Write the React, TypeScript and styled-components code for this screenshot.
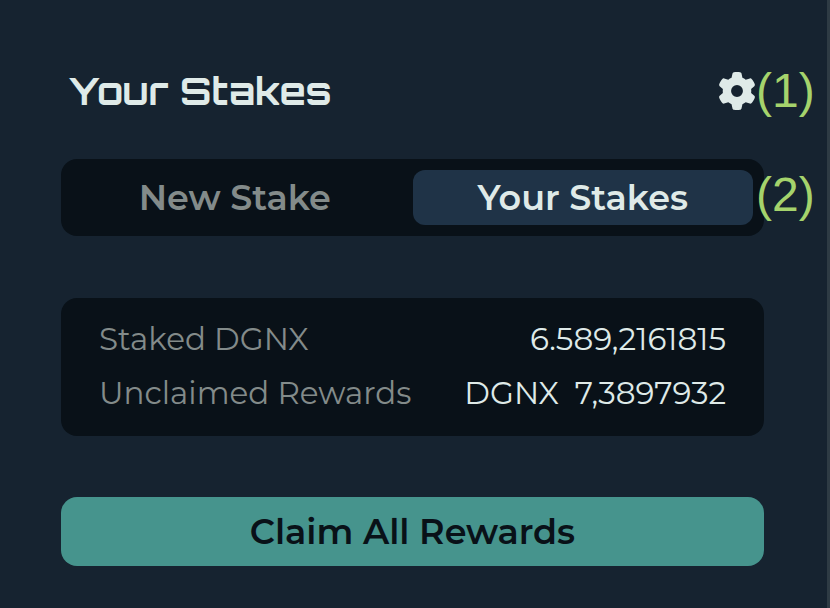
import React, { useState } from "react";
import styled, { createGlobalStyle } from "styled-components";
import { FaGear } from "react-icons/fa6";

const Global = createGlobalStyle`
  * { box-sizing: border-box; }
  body { margin: 0; background: #162330; }
  button { font: inherit; border: 0; padding: 0; cursor: pointer; }
`;

const Page = styled.main`
  min-height: 100vh;
  padding: 61px 63px 40px 61px;
  border-right: 3px solid #2e3b44;
  background: #162330;
  color: #dfeae8;
  font-family: Montserrat, Inter, "Liberation Sans", sans-serif;
`;

const Header = styled.header`
  display: flex;
  align-items: center;
  justify-content: space-between;
  height: 60px;
  padding: 0 8px;
`;

const Title = styled.h1`
  margin: 0;
  font-family: Orbitron, Inter, sans-serif;
  font-size: 38px;
  line-height: 60px;
  font-weight: 700;
`;

const Anchor = styled.div`
  position: relative;
  display: flex;
`;

const TabArea = styled(Anchor)`
  margin-top: 38px;
`;

const Marker = styled.span<{ $overlap?: boolean }>`
  position: absolute;
  top: ${(p) => (p.$overlap ? "8px" : "-9px")};
  left: ${(p) => (p.$overlap ? "calc(100% - 8px)" : "100%")};
  color: #a5d36c;
  font: 48px/56px "Liberation Sans", Arial, sans-serif;
`;

const IconButton = styled.button`
  display: flex;
  background: none;
  color: inherit;
`;

const TabBar = styled.div`
  flex: 1;
  display: grid;
  grid-template-columns: 1fr 1fr;
  height: 77px;
  padding: 11px;
  border-radius: 16px;
  background: #091118;
`;

const Tab = styled.button<{ $active: boolean }>`
  border-radius: 12px;
  background: ${(p) => (p.$active ? "#1f3347" : "transparent")};
  color: ${(p) => (p.$active ? "#dfeae8" : "#838b8a")};
  font-size: 35px;
  line-height: 54px;
  font-weight: 600;

  &:first-child {
    padding-right: 15px;
  }
`;

const Summary = styled.dl`
  margin: 62px 0 61px;
  padding: 14px 38px 16px;
  border-radius: 16px;
  background: #091118;
  font-size: 31px;
  line-height: 54px;
  font-weight: 400;
`;

const Row = styled.div`
  display: flex;
  justify-content: space-between;
`;

const Label = styled.dt`
  color: #838b8a;
`;

const Value = styled.dd`
  display: flex;
  gap: 16px;
  margin: 0;
`;

const ClaimButton = styled.button`
  width: 100%;
  height: 69px;
  border-radius: 16px;
  background: #46948d;
  color: #091118;
  font-size: 35px;
  line-height: 68px;
  font-weight: 600;
`;

export default function App() {
  const [tab, setTab] = useState("Your Stakes");
  return (
    <Page>
      <Global />
      <Header>
        <Title>Your Stakes</Title>
        <Anchor>
          <IconButton aria-label="Settings"><FaGear size={38} /></IconButton>
          <Marker>(1)</Marker>
        </Anchor>
      </Header>
      <TabArea>
        <TabBar>
          {["New Stake", "Your Stakes"].map((name) => (
            <Tab key={name} $active={tab === name} onClick={() => setTab(name)}>{name}</Tab>
          ))}
        </TabBar>
        <Marker $overlap>(2)</Marker>
      </TabArea>
      <Summary>
        <Row><Label>Staked DGNX</Label><Value>6.589,2161815</Value></Row>
        <Row><Label>Unclaimed Rewards</Label><Value><span>DGNX</span><span>7,3897932</span></Value></Row>
      </Summary>
      <ClaimButton>Claim All Rewards</ClaimButton>
    </Page>
  );
}
